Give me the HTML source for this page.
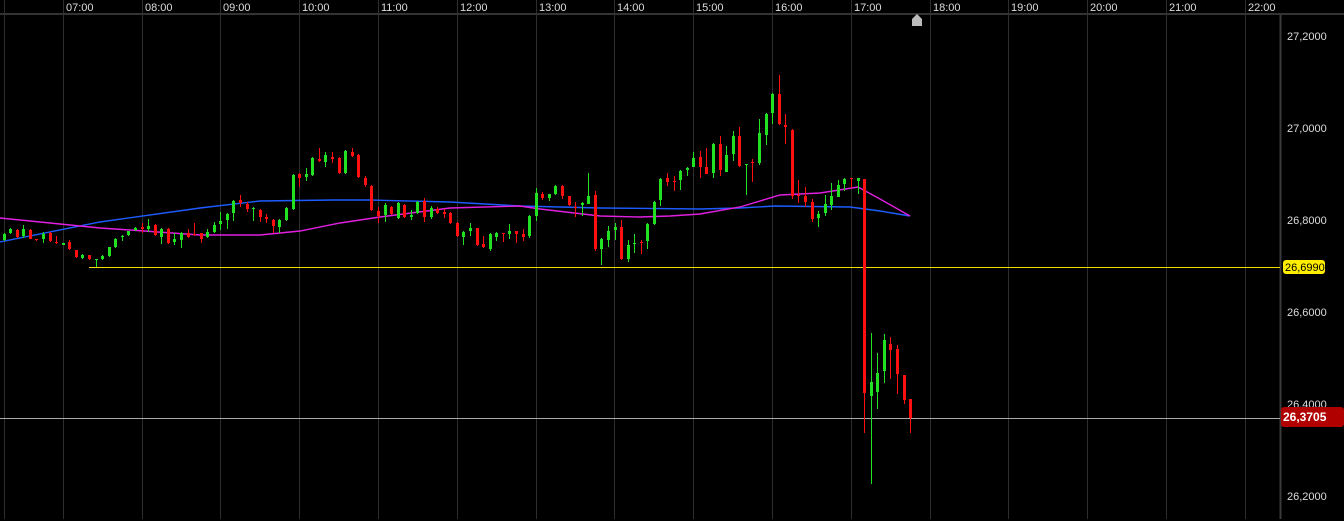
<!DOCTYPE html>
<html><head><meta charset="utf-8">
<style>
html,body{margin:0;padding:0;background:#000;width:1344px;height:521px;overflow:hidden}
svg{display:block}
text{font-family:"Liberation Sans",Arial,sans-serif;font-size:11px}
</style></head>
<body>
<svg id="s" width="1344" height="521" xmlns="http://www.w3.org/2000/svg">
<rect width="1344" height="521" fill="#000"/>
<g id="grid"></g>
<rect x="0" y="13" width="1344" height="2" fill="#333"/>
<g id="tl" fill="#ddd"></g>
<line x1="1280.5" y1="15" x2="1280.5" y2="519" stroke="#3a3a3a" stroke-width="2"/>
<g fill="#ddd">
<text x="1287" y="40">27,2000</text>
<text x="1287" y="132">27,0000</text>
<text x="1287" y="224">26,8000</text>
<text x="1287" y="316">26,6000</text>
<text x="1287" y="408">26,4000</text>
<text x="1287" y="500">26,2000</text>
</g>
<polyline fill="none" stroke="#1e5cff" stroke-width="1.4" points="0,242 100,222 200,208 260,201 333,200 370,200 450,202 520,206 600,208 700,209 740,208 775,206 850,207 880,211 910,216"/>
<polyline fill="none" stroke="#e020e0" stroke-width="1.4" points="0,218 50,223 100,228 130,230 200,235 260,235 300,231 340,223 380,217 450,208 520,206 540,209 600,216 640,217 670,216 700,214 740,207 780,195 820,193 858,187 880,199 910,216"/>
<line x1="89" y1="267.5" x2="1280" y2="267.5" stroke="#f0e000" stroke-width="1"/>
<line x1="0" y1="418.5" x2="1280" y2="418.5" stroke="#aaa" stroke-width="1"/>
<g id="c"></g>
<rect x="1283" y="260" width="42" height="14" rx="3" fill="#ffee00"/>
<text x="1285" y="271" fill="#000">26,6990</text>
<rect x="1281" y="407" width="63" height="20" rx="3" fill="#b00000"/>
<text x="1283" y="421" fill="#fff" font-weight="bold" style="font-size:12px">26,3705</text>
<path d="M912,26 L912,19 L917,14 L922,19 L922,26 Z" fill="#bbb"/>
</svg>
<script>
var NS="http://www.w3.org/2000/svg";
function el(p,n,a){var e=document.createElementNS(NS,n);for(var k in a)e.setAttribute(k,a[k]);p.appendChild(e);return e;}
var g=document.getElementById('grid'),tl=document.getElementById('tl');
var xs=[4,63,142,220,299,378,457,536,614,693,772,851,930,1008,1087,1166,1245];
var lb=["","07:00","08:00","09:00","10:00","11:00","12:00","13:00","14:00","15:00","16:00","17:00","18:00","19:00","20:00","21:00","22:00"];
xs.forEach(function(x,i){el(g,'line',{x1:x+.5,y1:0,x2:x+.5,y2:519,stroke:'#2e2e2e','stroke-width':1});
if(lb[i]){var t=el(tl,'text',{x:x+3,y:11});t.textContent=lb[i];}});
// x, top of body, bottom of body, wickTop, wickBot, color(g/r)
var C=[
[4,234,240,233,241,'g'],[10,229,233,228,234,'g'],[17,230,237,229,238,'r'],[23,229,236,225,238,'g'],[30,230,239,229,239,'r'],[36,239,240,239,241,'r'],
[43,234,239,232,243,'g'],[50,233,241,232,242,'r'],[56,242,243,236,244,'r'],[63,243,245,243,245,'g'],[69,242,249,240,250,'r'],[76,250,257,250,258,'r'],
[82,255,258,254,259,'g'],[89,255,259,255,260,'r'],[96,259,260,259,267,'g'],[102,256,259,255,260,'g'],[109,247,256,247,257,'g'],[115,239,247,238,248,'g'],
[122,236,237,235,241,'g'],[128,231,235,231,236,'g'],[135,228,230,227,231,'g'],[142,227,229,223,233,'r'],[148,226,229,219,232,'g'],[155,225,235,224,236,'r'],
[161,229,237,228,244,'g'],[168,229,243,228,244,'r'],[174,239,242,233,245,'g'],[181,233,240,232,248,'g'],[188,233,237,229,238,'r'],[194,234,235,223,236,'r'],
[201,233,239,233,243,'r'],[207,232,237,229,238,'g'],[214,225,232,222,233,'g'],[220,221,224,212,230,'g'],[227,214,220,213,229,'g'],[233,201,213,200,221,'g'],
[240,200,203,195,207,'r'],[247,204,209,202,212,'r'],[253,208,209,207,221,'g'],[260,210,217,209,222,'r'],[266,217,219,214,223,'r'],[273,220,226,219,233,'r'],
[279,220,227,219,233,'g'],[286,208,220,207,221,'g'],[293,175,209,174,210,'g'],[299,174,178,173,187,'r'],[306,174,177,168,181,'g'],[312,158,175,157,176,'g'],
[319,159,161,148,162,'r'],[325,155,162,152,167,'g'],[332,157,159,152,163,'r'],[339,158,173,157,174,'r'],[345,151,173,150,174,'g'],[352,152,156,148,157,'r'],
[358,155,177,154,178,'r'],[365,178,185,176,187,'r'],[371,186,210,185,211,'r'],[378,211,216,207,223,'r'],[385,205,215,203,222,'g'],[391,207,214,206,215,'r'],
[398,203,218,202,219,'g'],[404,205,217,204,218,'r'],[411,215,217,210,220,'g'],[417,202,213,201,214,'g'],[424,201,217,198,222,'r'],[431,208,217,206,219,'g'],
[437,209,213,207,214,'r'],[444,212,214,209,218,'r'],[450,213,223,212,224,'r'],[457,223,236,222,237,'r'],[463,232,237,231,245,'g'],[470,228,231,223,236,'g'],
[477,228,245,228,246,'r'],[483,244,247,236,248,'r'],[490,234,249,233,251,'g'],[496,233,237,232,241,'g'],[503,233,234,233,242,'r'],[509,231,234,224,239,'g'],
[516,231,234,231,243,'r'],[523,234,237,229,241,'r'],[529,216,236,215,238,'g'],[536,193,216,188,221,'g'],[542,194,198,192,200,'r'],[549,194,198,194,201,'g'],
[555,186,194,185,195,'g'],[562,186,196,185,199,'r'],[569,196,205,196,206,'r'],[575,207,208,202,217,'r'],[582,203,205,202,216,'g'],[588,196,204,173,204,'g'],
[595,195,249,191,251,'r'],[601,239,249,238,265,'g'],[608,231,240,226,247,'g'],[615,227,230,223,240,'g'],[621,227,259,220,260,'r'],[628,245,259,240,262,'g'],
[634,243,244,234,253,'g'],[641,242,243,240,254,'r'],[647,224,241,223,249,'g'],[654,202,224,201,225,'g'],[660,179,200,178,206,'g'],[667,178,182,173,186,'r'],
[674,181,182,176,191,'r'],[680,171,180,170,190,'g'],[687,168,170,167,176,'g'],[693,158,167,152,167,'g'],[700,157,167,151,178,'r'],[706,167,174,148,174,'r'],
[713,144,173,143,178,'g'],[720,144,170,136,176,'r'],[726,155,172,146,172,'g'],[733,136,154,131,161,'g'],[739,136,166,127,167,'r'],[746,164,165,164,195,'g'],
[752,162,163,159,182,'r'],[759,133,163,119,165,'g'],[766,114,135,113,145,'g'],[772,94,113,93,124,'g'],[779,94,124,75,125,'r'],[785,125,127,114,144,'r'],
[792,130,196,129,199,'r'],[798,195,196,180,203,'r'],[805,196,202,187,207,'r'],[812,202,219,199,222,'r'],[818,214,218,211,227,'g'],[825,204,213,195,216,'g'],
[831,196,205,183,210,'g'],[838,185,197,180,197,'g'],[844,179,184,178,191,'g'],[851,178,179,178,188,'r'],[858,178,181,178,194,'g'],[864,179,393,179,433,'r'],
[871,382,396,333,484,'g'],[877,373,392,353,409,'g'],[884,340,371,334,383,'g'],[890,344,350,337,379,'r'],[897,349,374,345,394,'r'],[904,375,400,375,404,'r'],
[910,399,418,399,433,'r']];
var c=document.getElementById('c');
C.forEach(function(d){var col=d[5]=='g'?'#22e022':'#ff1010';
el(c,'rect',{x:d[0],y:d[3],width:1,height:Math.max(1,d[4]-d[3]),fill:col});
el(c,'rect',{x:d[0]-1,y:d[1],width:3,height:Math.max(1,d[2]-d[1]),fill:col});});
</script>
</body></html>
